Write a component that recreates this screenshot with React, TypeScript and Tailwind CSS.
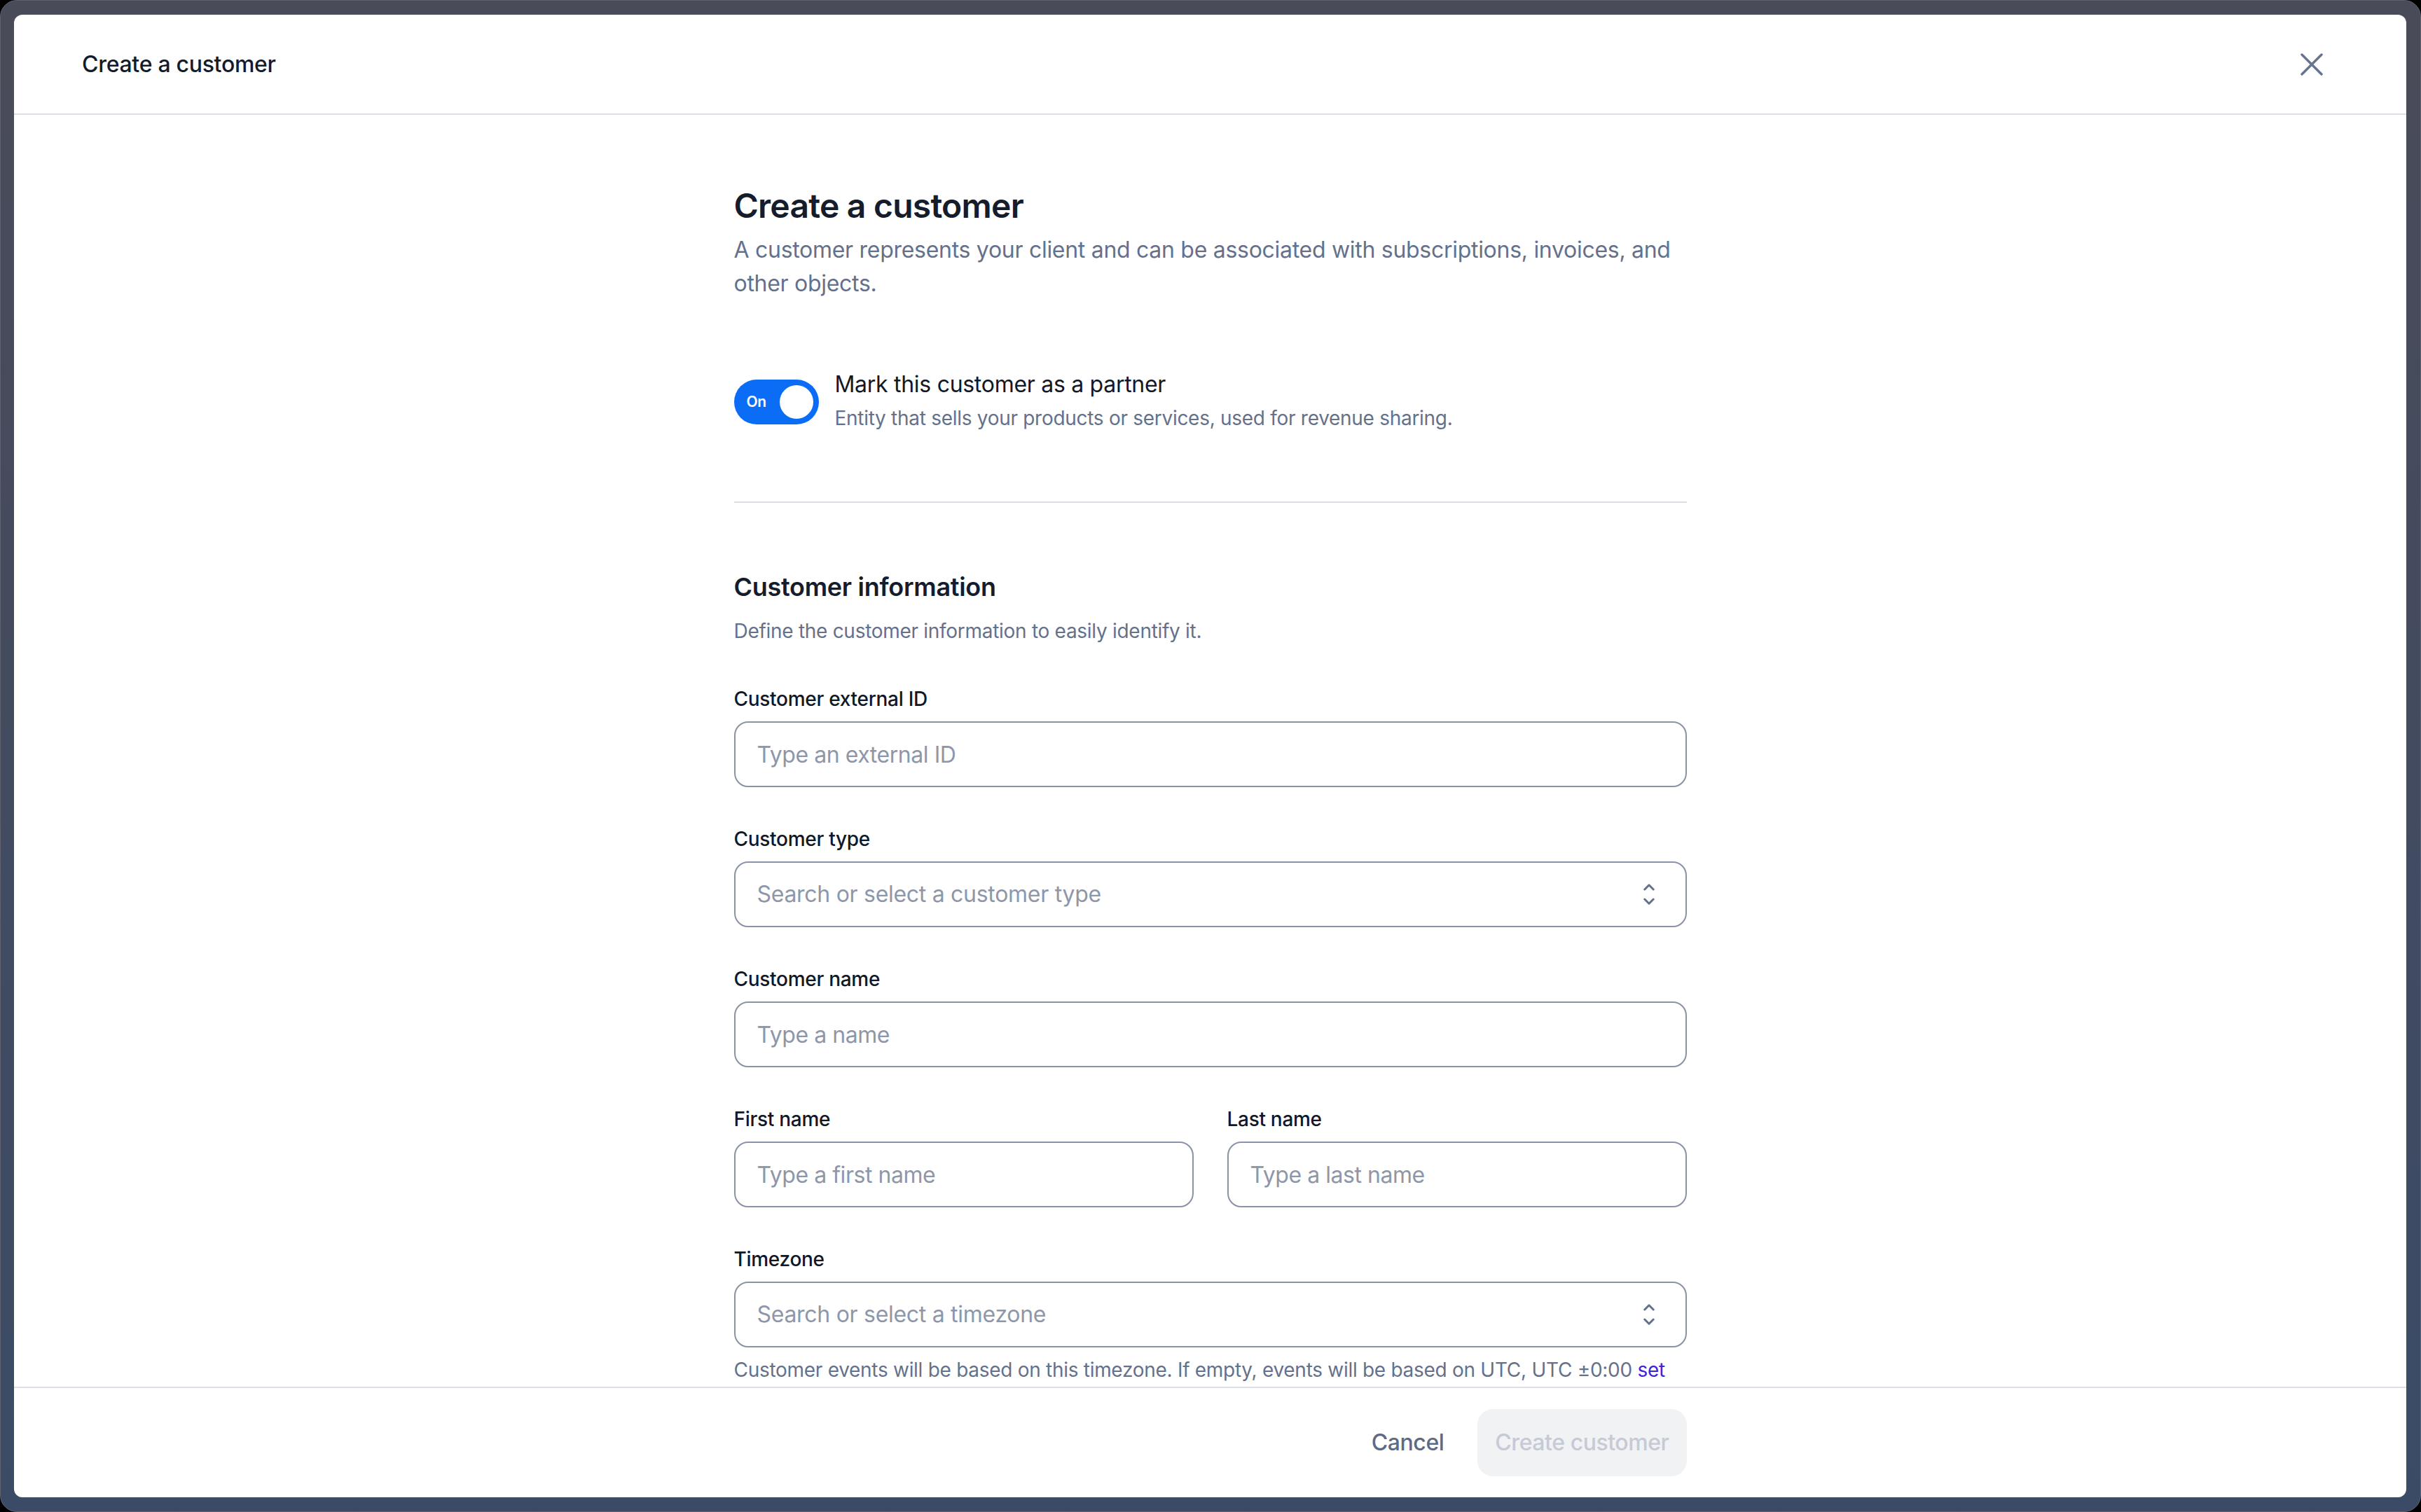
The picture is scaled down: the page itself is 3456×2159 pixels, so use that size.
import React from "react";

function Chevrons() {
  return (
    <svg width="16" height="30" viewBox="0 0 16 30" fill="none" stroke="#65718b" strokeWidth="3" strokeLinecap="round" strokeLinejoin="round">
      <path d="M1.8 8 L8 1.8 L14.2 8" />
      <path d="M1.8 22 L8 28.2 L14.2 22" />
    </svg>
  );
}

function Label({ children }: { children: React.ReactNode }) {
  return <div className="text-[28px] leading-[40px] font-medium text-[#111827]">{children}</div>;
}

function TextField({ label, placeholder }: { label: string; placeholder: string }) {
  return (
    <div className="flex flex-col">
      <Label>{label}</Label>
      <input
        readOnly
        placeholder={placeholder}
        className="mt-[12px] h-[94px] w-full rounded-[20px] border-2 border-[#8a93a5] bg-white px-[31px] text-[32px] tracking-[-0.014em] text-[#111827] outline-none placeholder:text-[#8e97a9]"
      />
    </div>
  );
}

function SelectField({ label, placeholder }: { label: string; placeholder: string }) {
  return (
    <div className="flex flex-col">
      <Label>{label}</Label>
      <div className="mt-[12px] flex h-[94px] w-full items-center justify-between rounded-[20px] border-2 border-[#8a93a5] bg-white pl-[31px] pr-[44px]">
        <span className="text-[32px] text-[#8e97a9]">{placeholder}</span>
        <Chevrons />
      </div>
    </div>
  );
}

export default function App() {
  return (
    <div className="h-[2159px] w-[3456px] bg-black font-['Inter',sans-serif] tracking-[-0.018em]">
      <div className="h-full w-full rounded-[24px] border border-[#60626f] bg-gradient-to-b from-[#4a4b59] to-[#3b4b67] pb-[20px] pl-[19px] pr-[20px] pt-[20px]">
        <div className="flex h-full flex-col overflow-hidden rounded-[12px] bg-white">
          {/* Header */}
          <div className="flex h-[143px] shrink-0 items-center justify-between border-b-2 border-[#dcdfe8] pl-[97px] pr-[119px]">
            <div className="text-[32px] font-medium text-[#141b2b]">Create a customer</div>
            <svg width="32" height="32" viewBox="0 0 32 32" fill="none" stroke="#66758f" strokeWidth="3.5" strokeLinecap="round">
              <path d="M2 2 L30 30" />
              <path d="M30 2 L2 30" />
            </svg>
          </div>

          {/* Body */}
          <div className="flex-1 overflow-hidden">
            <div className="mx-auto w-[1360px] pt-[98px]">
              <h1 className="text-[48px] font-semibold leading-[64px] tracking-[-0.016em] text-[#151c2c]">Create a customer</h1>
              <p className="mt-[7px] text-[32px] leading-[48px] text-[#65718b]">
                A customer represents your client and can be associated with subscriptions, invoices, and other objects.
              </p>

              <div className="mt-[96px] flex items-start gap-[23px]">
                <div className="mt-[17px] flex h-[64px] w-[121px] shrink-0 items-center justify-between rounded-full bg-[#0b6cf5] pl-[18px] pr-[8px]">
                  <span className="text-[21px] font-semibold text-white">On</span>
                  <span className="h-[48px] w-[48px] rounded-full bg-white" />
                </div>
                <div>
                  <p className="text-[32px] leading-[48px] text-[#111827]">Mark this customer as a partner</p>
                  <p className="mt-[4px] text-[28px] leading-[40px] text-[#65718b]">
                    Entity that sells your products or services, used for revenue sharing.
                  </p>
                </div>
              </div>

              <div className="mt-[99px] h-[2px] bg-[#dadee6]" />

              <h2 className="mt-[92px] text-[36px] font-semibold leading-[56px] text-[#151c2c]">Customer information</h2>
              <p className="mt-[15px] text-[28px] leading-[40px] text-[#65718b]">Define the customer information to easily identify it.</p>

              <div className="mt-[57px] flex flex-col gap-[54px]">
                <TextField label="Customer external ID" placeholder="Type an external ID" />
                <SelectField label="Customer type" placeholder="Search or select a customer type" />
                <TextField label="Customer name" placeholder="Type a name" />
                <div className="grid grid-cols-2 gap-x-[48px]">
                  <TextField label="First name" placeholder="Type a first name" />
                  <TextField label="Last name" placeholder="Type a last name" />
                </div>
                <div className="flex flex-col">
                  <SelectField label="Timezone" placeholder="Search or select a timezone" />
                  <p className="mt-[12px] text-[28px] leading-[40px] text-[#65718b]">
                    Customer events will be based on this timezone. If empty, events will be based on UTC, UTC ±0:00{" "}
                    <span className="text-[#4024d6]">set</span>
                  </p>
                </div>
              </div>
            </div>
          </div>

          {/* Footer */}
          <div className="flex h-[158px] shrink-0 items-center border-t-2 border-[#dcdfe8]">
            <div className="mx-auto flex w-[1360px] items-center justify-end gap-[24px]">
              <button className="h-[96px] rounded-[22px] px-[24px] text-[32px] font-medium tracking-[-0.014em] text-[#5d6a85]">Cancel</button>
              <button className="h-[96px] rounded-[22px] bg-[#f1f2f4] px-[25px] text-[32px] font-medium tracking-[-0.014em] text-[#c5cad5]">Create customer</button>
            </div>
          </div>
        </div>
      </div>
    </div>
  );
}
